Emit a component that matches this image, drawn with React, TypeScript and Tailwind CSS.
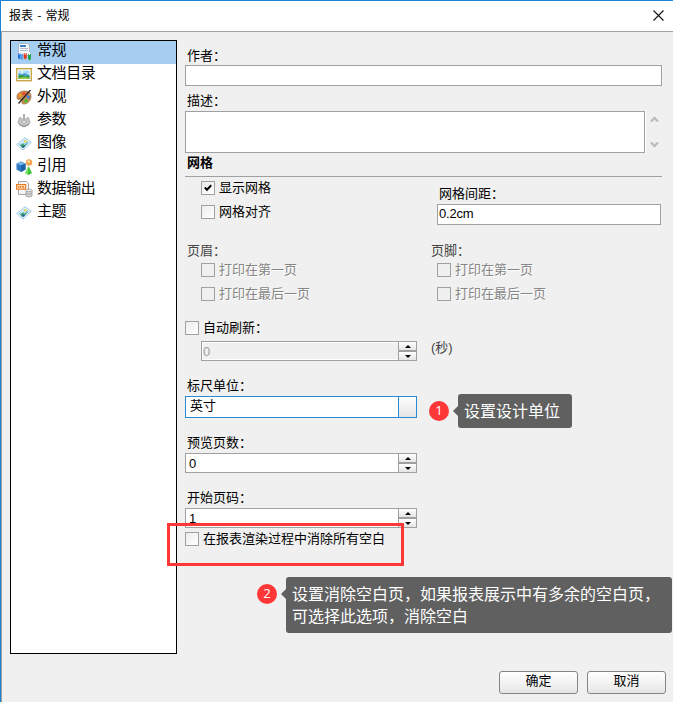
import type { ReactNode } from 'react';
import clsx from 'clsx';

const GeneralIcon = () => (
  <svg width="16" height="18" viewBox="0 0 16 18">
    <path d="M2.5.5h9l2 2v10h-11z" fill="#f4f8fc" stroke="#a9b7c6" />
    <rect x="4" y="2" width="6" height="2" fill="#3f7fc4" />
    <path d="M4 5.500h8M4 7.500h8" stroke="#b4bcc6" />
    <path d="M2 10h2.500v5l-1.200 1.500L2 15z" fill="#1f6fd0" />
    <path d="M4.500 11H7v5l-1.200 1.500L4.500 16z" fill="#55a2ee" />
    <path d="M7.700 10h3v5l-1.500 1.500L7.700 15z" fill="#e8351e" />
    <path d="M12 11h3v5l-1.500 1.500L12 16z" fill="#25a550" />
    <path d="M3.200 9v2.500M9.200 9v2.500M13.500 9v3" stroke="#fff" />
  </svg>
);

const TocIcon = () => (
  <svg width="16" height="14" viewBox="0 0 16 14">
    <rect x=".7" y=".7" width="14.600" height="12" fill="#fff" stroke="#c9a64a" strokeWidth="1.400" />
    <rect x="2.500" y="2.500" width="11" height="8.500" fill="#a9ddf7" />
    <path d="M2.500 5l3 1.500L9 5l4.500 2.500V9l-11-.5z" fill="#4a9fce" />
    <path d="M2.500 7.500Q6 6 9 8.500l4.500-1V11h-11z" fill="#35983b" />
    <path d="M2.500 10q6-2 11 0v1h-11z" fill="#91ca49" />
    <circle cx="6" cy="4" r="1" fill="#fff" />
  </svg>
);

const AppearanceIcon = () => (
  <svg width="16" height="15" viewBox="0 0 16 15">
    <path d="M1 6.500C1 3 5 1 9 1s6 2 6 5.500S12 14 8 14c-2 0-2.500-1-2-2.500S4 9.500 2.500 9.500 1 8 1 6.500z" fill="#c68a55" stroke="#a0673a" strokeWidth=".7" />
    <circle cx="4" cy="5.300" r="1.700" fill="#f39a1e" />
    <circle cx="8" cy="3.700" r="1.700" fill="#e34a2b" />
    <circle cx="12.300" cy="7" r="1.700" fill="#3d83d9" />
    <circle cx="10" cy="11" r="1.900" fill="#4fbb35" />
    <path d="M14.500 0L2.500 13.500" stroke="#262626" strokeWidth="1.300" />
  </svg>
);

const ParametersIcon = () => (
  <svg width="14" height="15" viewBox="0 0 14 15">
    <path d="M3 4L1.500 7 1 10l2 2 4 2 4-2 2-2-.5-3L11 4 9 6H5z" fill="#c7c7c7" stroke="#a9a9a9" strokeWidth=".8" />
    <path d="M5 5.500v4q2 2 4 0v-4" fill="#ededed" stroke="#a0a0a0" strokeWidth=".8" />
    <path d="M7 1v7" stroke="#9e9e9e" strokeWidth="1.600" />
    <path d="M2 11.500l5 2 5-2" fill="none" stroke="#8d8d8d" />
  </svg>
);

const ImageIcon = () => (
  <svg width="16" height="14" viewBox="0 0 16 14">
    <path d="M.7 7.500L9 .8l6.300 4.500L7 13z" fill="#f4faff" stroke="#9cc3e2" />
    <path d="M2.700 7.500L9 2.400l4.300 3L7 11.300z" fill="#8ecbef" />
    <path d="M4 8.500l3.500-2L8 8.300 12 6l-5 5z" fill="#3f9c54" />
    <path d="M5.500 9.500l3-1 .8.700L7 11z" fill="#2461a5" />
    <path d="M5 6.500l2-1.500 2 1" fill="none" stroke="#fff" strokeWidth=".9" />
    <circle cx="9.500" cy="4.500" r="1.300" fill="#f8e03b" />
  </svg>
);

const ReferencesIcon = () => (
  <svg width="17" height="16" viewBox="0 0 17 16">
    <path d="M.5 4.500L5 2.500l4.500 2v6L5 13 .5 10.500z" fill="#2d7bc4" />
    <path d="M.5 4.500L5 2.500l4.500 2L5 6.500z" fill="#75b6e8" />
    <path d="M5 6.500V13l4.500-2.500v-6z" fill="#1e61aa" />
    <circle cx="13" cy="3.500" r="3.200" fill="#f6a24a" />
    <ellipse cx="12.500" cy="2.500" rx="1.700" ry="1" fill="#fde0b5" />
    <path d="M12.500 7L16 14l-3.500 2L9 14z" fill="#3fc53b" />
    <path d="M12.500 7l-1 8.300L9 14z" fill="#8de575" />
  </svg>
);

const DataOutputIcon = () => (
  <svg width="17" height="17" viewBox="0 0 17 17">
    <path d="M2.500.5h8l2 2V13.500h-10z" fill="#f6f6f6" stroke="#a6a6a6" />
    <rect x=".6" y="3.600" width="9" height="4.500" fill="#fff2e2" stroke="#ec7c22" strokeWidth="1.200" />
    <path d="M2 5l1.500 2M3.500 5L2 7M4.500 7V5l1 1 1-1v2M7.500 5v2h1" stroke="#ec7c22" strokeWidth=".8" fill="none" />
    <path d="M10 9.500v5.500q3 2 6 0V9.500" fill="#d9d9d9" stroke="#969696" strokeWidth=".8" />
    <ellipse cx="13" cy="9.500" rx="3" ry="1.300" fill="#f2f2f2" stroke="#969696" strokeWidth=".8" />
    <path d="M10 12.500q3 1.500 6 0" fill="none" stroke="#969696" strokeWidth=".8" />
  </svg>
);

const menu = [
  { label: '常规', icon: <GeneralIcon /> },
  { label: '文档目录', icon: <TocIcon /> },
  { label: '外观', icon: <AppearanceIcon /> },
  { label: '参数', icon: <ParametersIcon /> },
  { label: '图像', icon: <ImageIcon /> },
  { label: '引用', icon: <ReferencesIcon /> },
  { label: '数据输出', icon: <DataOutputIcon /> },
  { label: '主题', icon: <ImageIcon /> },
];

function Label({ children, className }: { children: ReactNode; className?: string }) {
  return <div className={clsx('h-4 pl-0.5 leading-4 whitespace-nowrap', className)}>{children}</div>;
}

type CheckProps = { label: string; checked?: boolean; disabled?: boolean; className?: string };

function Check({ label, checked, disabled, className }: CheckProps) {
  return (
    <div className={clsx('flex h-3.5 items-center', className)}>
      <span
        className={clsx(
          'flex size-3.5 shrink-0 items-center justify-center border border-[#a0a0a0]',
          disabled ? 'bg-[#f0f0f0]' : 'bg-linear-to-br from-[#ececec] to-white'
        )}
      >
        {checked && (
          <svg width="8" height="8" viewBox="0 0 8 8">
            <path d="M.8 3.500L3 5.800 7.200 1.300" fill="none" stroke="#000" strokeWidth="2" />
          </svg>
        )}
      </span>
      <span
        className={clsx(
          'ml-1 leading-3.5 whitespace-nowrap',
          disabled && 'text-[#868686] [text-shadow:1px_1px_0_#fff]'
        )}
      >
        {label}
      </span>
    </div>
  );
}

type SpinnerProps = { value: string; disabled?: boolean; className?: string };

function Spinner({ value, disabled, className }: SpinnerProps) {
  const half = 'flex flex-1 items-center justify-center bg-linear-to-b from-white to-[#e4e4e4]';
  return (
    <div
      className={clsx(
        'flex h-5 border border-[#a0a0a0]',
        disabled ? 'bg-[#f0f0f0] text-[#a0a0a0] inset-ring inset-ring-white' : 'bg-white',
        className
      )}
    >
      <span className="flex-1 leading-[19px]">{value}</span>
      <div className="flex w-[18px] flex-col gap-0.5 border-l border-[#a0a0a0] bg-[#a0a0a0]">
        <span className={half}>
          <svg width="6" height="3" viewBox="0 0 6 3">
            <path d="M3 0l3 3H0z" />
          </svg>
        </span>
        <span className={half}>
          <svg width="6" height="3" viewBox="0 0 6 3">
            <path d="M0 0h6L3 3z" />
          </svg>
        </span>
      </div>
    </div>
  );
}

function Callout({ step, children, className }: { step: number; children: ReactNode; className: string }) {
  return (
    <div className={clsx('absolute flex items-start text-white', className)}>
      <span className="mt-[7px] flex size-5 items-center justify-center rounded-full bg-[#ff3737] font-['Open_Sans'] text-[13px]">
        {step}
      </span>
      <svg className="mt-3 ml-1" width="5" height="10" viewBox="0 0 5 10">
        <path d="M5 0v10L0 5z" fill="#606060" />
      </svg>
      <div className="rounded-[3px] bg-[#606060] pt-[7px] pr-3 pb-[5px] pl-1.5 text-base leading-[22px] whitespace-nowrap">
        {children}
      </div>
    </div>
  );
}

export default function App() {
  return (
    <div className="relative flex h-[702px] w-[673px] flex-col overflow-hidden border-t border-l border-[#1883d7] bg-[#f0f0f0] font-['Liberation_Sans','Noto_Sans_CJK_SC',sans-serif] text-[13px] text-black">
      <header className="flex h-[30px] shrink-0 items-center justify-between bg-white pr-[9px] pb-0.5 pl-2 text-xs">
        <span className="font-['Noto_Sans_CJK_SC',sans-serif] [word-spacing:1.500px]">报表 - 常规</span>
        <svg width="11" height="11" viewBox="0 0 11 11">
          <path d="M.5.5l10 10M10.500.5l-10 10" stroke="#111" strokeWidth="1.100" />
        </svg>
      </header>

      <div className="flex flex-1 border-t border-l border-[#a0a0a0]">
        <aside className="mt-2 ml-2 h-[614px] w-[167px] shrink-0 border border-black bg-white">
          {menu.map((item, i) => (
            <div key={item.label} className={clsx('flex h-[23px] items-center pb-0.5 pl-1', i === 0 && 'bg-[#a6cef0]')}>
              <span className="flex w-[18px] justify-center">{item.icon}</span>
              <span className="-mt-1 ml-1 text-[15px] leading-5 tracking-[-0.4px]">{item.label}</span>
            </div>
          ))}
        </aside>

        <main className="ml-2 flex w-[477px] flex-col">
          <Label className="mt-4">作者：</Label>
          <div className="mt-px h-[21px] border border-[#a0a0a0] bg-white" />

          <Label className="mt-[7px]">描述：</Label>
          <div className="mt-0.5 flex h-[42px]">
            <div className="w-[460px] border border-[#a0a0a0] bg-white" />
            <div className="flex flex-1 flex-col items-center justify-between border-l border-white py-[5px]">
              <svg width="9" height="7" viewBox="0 0 9 7">
                <path d="M1 5.500L4.500 2 8 5.500" fill="none" stroke="#bcbcbc" strokeWidth="2.300" />
              </svg>
              <svg width="9" height="7" viewBox="0 0 9 7">
                <path d="M1 1.500L4.500 5 8 1.500" fill="none" stroke="#bcbcbc" strokeWidth="2.300" />
              </svg>
            </div>
          </div>

          <Label className="mt-0.5 font-bold">网格</Label>
          <div className="mt-[5px] border-t border-[#a0a0a0]" />

          <div className="flex h-[66px]">
            <div className="w-[252px] pt-1 pl-4">
              <Check label="显示网格" checked />
              <Check label="网格对齐" className="mt-2.5" />
            </div>
            <div className="w-56 pt-[9px]">
              <Label>网格间距：</Label>
              <div className="mt-0.5 h-[21px] border border-[#a0a0a0] bg-white pl-px leading-[18px] tracking-[-0.2px]">0.2cm</div>
            </div>
          </div>

          <div className="flex h-[78px]">
            <div className="w-[246px]">
              <Label className="text-[#444]">页眉：</Label>
              <Check label="打印在第一页" disabled className="mt-1 ml-4" />
              <Check label="打印在最后一页" disabled className="mt-2.5 ml-4" />
            </div>
            <div>
              <Label className="pl-0! text-[#444]">页脚：</Label>
              <Check label="打印在第一页" disabled className="mt-1 ml-1.5" />
              <Check label="打印在最后一页" disabled className="mt-2.5 ml-1.5" />
            </div>
          </div>

          <Check label="自动刷新：" />
          <div className="mt-1.5 flex h-5">
            <Spinner value="0" disabled className="ml-4 w-[216px] pl-px" />
            <span className="ml-3.5 leading-3.5 text-[#444]">(秒)</span>
          </div>

          <Label className="mt-[17px]">标尺单位：</Label>
          <div className="mt-0.5 flex h-[22px] w-[232px] border border-[#2a8ad4] bg-white">
            <span className="flex-1 pl-1 leading-[18px]">英寸</span>
            <span className="w-[18px] border-l border-[#2a8ad4] bg-linear-to-b from-white to-[#e4e4e4]" />
          </div>

          <Label className="mt-[17px]">预览页数：</Label>
          <Spinner value="0" className="mt-0.5 w-[232px] pl-[3px]" />

          <Label className="mt-[17px]">开始页码：</Label>
          <Spinner value="1" className="mt-0.5 w-[232px] pl-[3px]" />

          <Check label="在报表渲染过程中消除所有空白" className="mt-1" />

          <div className="mt-[125px] -mr-1 flex justify-end gap-[9px]">
            {['确定', '取消'].map((label) => (
              <button
                key={label}
                className="h-[23px] w-[79px] rounded-[3px] border border-[#858585] bg-linear-to-b from-white to-[#e6e6e6] pb-1 leading-[18px]"
              >
                {label}
              </button>
            ))}
          </div>
        </main>
      </div>

      {/* annotations over the dialog */}
      <div className="absolute top-[522px] left-[166px] h-[43px] w-[237px] border-3 border-[#ff3737]" />
      <Callout step={1} className="top-[393px] left-[428px]">
        设置设计单位
      </Callout>
      <Callout step={2} className="top-[576px] left-[256px]">
        设置消除空白页，如果报表展示中有多余的空白页，
        <br />
        可选择此选项，消除空白
      </Callout>
    </div>
  );
}
